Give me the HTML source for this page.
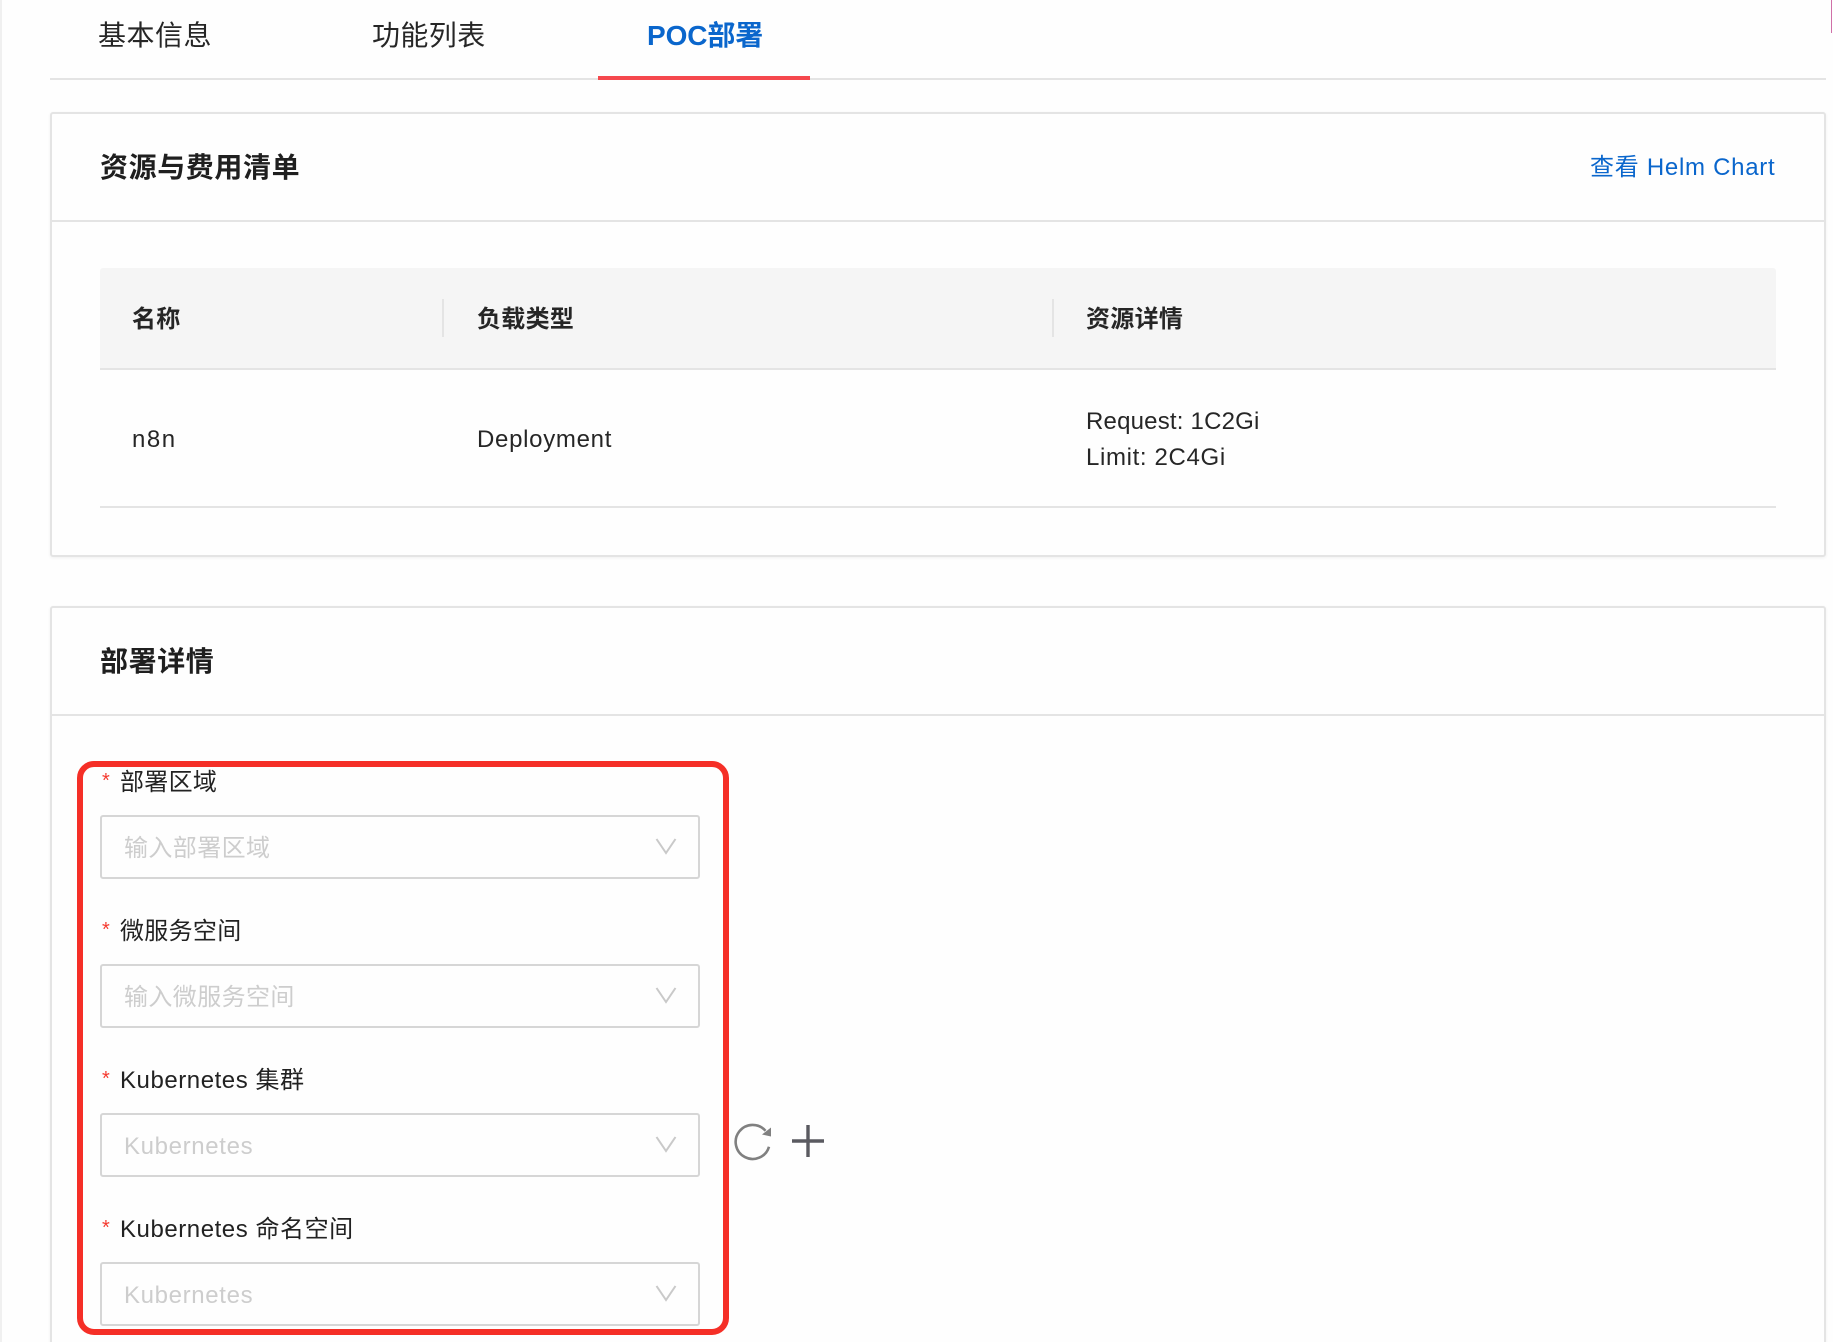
<!DOCTYPE html>
<html lang="zh">
<head>
<meta charset="utf-8">
<title>POC部署</title>
<style>
html{margin:0;padding:0;width:1833px;height:1342px;overflow:hidden;background:#fefefe;}
body{margin:0;padding:0;width:1833px;height:1342px;overflow:hidden;position:relative;background:#fefefe;
font-family:"Liberation Sans","Noto Sans CJK SC",sans-serif;color:#222;}
.a{position:absolute;white-space:nowrap;}
.t{position:absolute;white-space:nowrap;line-height:36px;height:36px;}
.card{position:absolute;left:50px;width:1776px;box-sizing:border-box;background:#fefefe;border:2px solid #e4e4e4;border-radius:3px;box-shadow:0 1px 3px rgba(0,0,0,.06);}
.line{position:absolute;background:#e4e4e4;}
.title{font-size:28px;font-weight:700;color:#1f1f1f;letter-spacing:.6px;}
.th{font-size:24px;font-weight:700;color:#262626;letter-spacing:.3px;}
.td{font-size:24px;color:#262626;letter-spacing:.7px;}
.label{font-size:24px;color:#222;letter-spacing:.55px;}
.star{position:absolute;font-size:20px;color:#f5392f;line-height:20px;left:102px;}
.input{position:absolute;left:100px;width:600px;height:64px;box-sizing:border-box;border:2px solid #d6d6d6;border-radius:3px;background:#fefefe;}
.ph{position:absolute;left:124px;font-size:24px;color:#cdcdcd;line-height:36px;white-space:nowrap;letter-spacing:.65px;}
</style>
</head>
<body>
<div class="a" style="left:0;top:0;width:2px;height:1342px;background:#f0f0f0;"></div>
<div class="a" style="left:1831px;top:0;width:1px;height:33px;background:#d070a8;"></div>

<div class="t" style="left:98px;top:18px;font-size:28px;color:#262626;letter-spacing:.5px;">基本信息</div>
<div class="t" style="left:372px;top:18px;font-size:28px;color:#262626;letter-spacing:.4px;">功能列表</div>
<div class="t" style="left:647px;top:18px;font-size:28px;font-weight:700;color:#0a66cc;letter-spacing:-.1px;">POC部署</div>
<div class="line" style="left:50px;top:78px;width:1776px;height:2px;"></div>
<div class="a" style="left:598px;top:76px;width:212px;height:4px;background:#f5484d;"></div>

<div class="card" style="top:112px;height:445px;"></div>
<div class="t title" style="left:100px;top:150px;">资源与费用清单</div>
<div class="t" style="left:1590px;top:150px;font-size:24px;color:#0a66cc;letter-spacing:.72px;">查看 Helm Chart</div>
<div class="line" style="left:51px;top:220px;width:1775px;height:2px;"></div>

<div class="a" style="left:100px;top:268px;width:1676px;height:102px;background:#f5f5f5;border-radius:3px 3px 0 0;"></div>
<div class="line" style="left:100px;top:368px;width:1676px;height:2px;"></div>
<div class="line" style="left:442px;top:299px;width:2px;height:38px;"></div>
<div class="line" style="left:1052px;top:299px;width:2px;height:38px;"></div>
<div class="t th" style="left:132px;top:302px;">名称</div>
<div class="t th" style="left:477px;top:302px;">负载类型</div>
<div class="t th" style="left:1086px;top:302px;">资源详情</div>
<div class="t td" style="left:132px;top:422px;letter-spacing:1.5px;">n8n</div>
<div class="t td" style="left:477px;top:422px;">Deployment</div>
<div class="t td" style="left:1086px;top:404px;letter-spacing:.2px;">Request: 1C2Gi</div>
<div class="t td" style="left:1086px;top:440px;letter-spacing:.65px;">Limit: 2C4Gi</div>
<div class="line" style="left:100px;top:506px;width:1676px;height:2px;"></div>

<div class="card" style="top:606px;height:760px;"></div>
<div class="t title" style="left:100px;top:644px;">部署详情</div>
<div class="line" style="left:51px;top:714px;width:1775px;height:2px;"></div>

<div class="star" style="top:771px;">*</div>
<div class="t label" style="left:120px;top:765px;letter-spacing:.3px;">部署区域</div>
<div class="input" style="top:815px;"></div>
<div class="ph" style="top:831px;letter-spacing:.4px;">输入部署区域</div>

<div class="star" style="top:920px;">*</div>
<div class="t label" style="left:120px;top:914px;letter-spacing:.3px;">微服务空间</div>
<div class="input" style="top:964px;"></div>
<div class="ph" style="top:980px;letter-spacing:.4px;">输入微服务空间</div>

<div class="star" style="top:1069px;">*</div>
<div class="t label" style="left:120px;top:1063px;">Kubernetes 集群</div>
<div class="input" style="top:1113px;"></div>
<div class="ph" style="top:1129px;">Kubernetes</div>

<div class="star" style="top:1218px;">*</div>
<div class="t label" style="left:120px;top:1212px;">Kubernetes 命名空间</div>
<div class="input" style="top:1262px;"></div>
<div class="ph" style="top:1278px;">Kubernetes</div>

<svg class="a" style="left:0;top:0;" width="1833" height="1342" viewBox="0 0 1833 1342" fill="none">
  <rect x="80" y="764" width="646" height="568" rx="14" ry="14" stroke="#f52f27" stroke-width="6"/>
  <g stroke="#c9c9c9" stroke-width="2">
    <path d="M656.5 839L666 853L675.5 839"/>
    <path d="M656.5 988L666 1002L675.5 988"/>
    <path d="M656.5 1137L666 1151L675.5 1137"/>
    <path d="M656.5 1286L666 1300L675.5 1286"/>
  </g>
  <path d="M769 1146.7A17 17 0 1 1 765.5 1130.8" stroke="#808080" stroke-width="2.6"/>
  <path d="M771 1127.5L771 1136.5L762 1134.5Z" fill="#808080"/>
  <path d="M792 1141H824M808 1125V1157" stroke="#5a5a60" stroke-width="3.4"/>
</svg>
</body>
</html>
